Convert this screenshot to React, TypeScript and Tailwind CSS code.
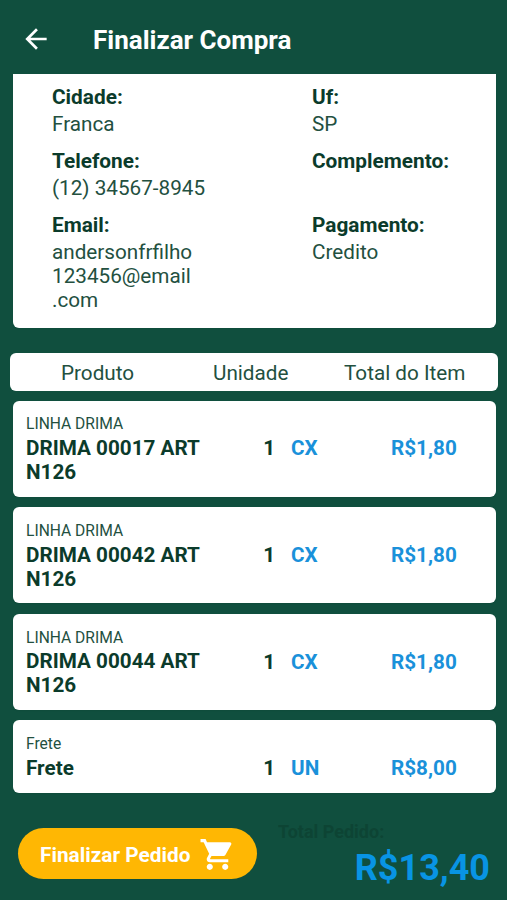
import React from 'react';
import { MdArrowBack, MdShoppingCart } from 'react-icons/md';

interface FieldProps {
  label: string;
  value: string;
}

interface OrderItem {
  group: string;
  name: string;
  quantity: number;
  unit: string;
  total: string;
}

const items: OrderItem[] = [
  { group: 'LINHA DRIMA', name: 'DRIMA 00017 ART N126', quantity: 1, unit: 'CX', total: 'R$1,80' },
  { group: 'LINHA DRIMA', name: 'DRIMA 00042 ART N126', quantity: 1, unit: 'CX', total: 'R$1,80' },
  { group: 'LINHA DRIMA', name: 'DRIMA 00044 ART N126', quantity: 1, unit: 'CX', total: 'R$1,80' },
  { group: 'Frete', name: 'Frete', quantity: 1, unit: 'UN', total: 'R$8,00' },
];

const Field: React.FC<FieldProps> = ({ label, value }) => (
  <div className="min-h-[51px]">
    <h2 className="mb-[3px] text-[20.8px] font-bold">{label}</h2>
    <p className="whitespace-pre-line text-[#23503f]">{value}</p>
  </div>
);

const ItemCard: React.FC<{ item: OrderItem }> = ({ item }) => (
  <li className="flex rounded-md bg-white pt-[13.7px] pb-[12.6px] pl-[13px] font-bold shadow-xs">
    <div className="w-[200px]">
      <p className="text-[15.6px] leading-[21.3px] font-normal text-[#23503f]">{item.group}</p>
      <p className="mt-[0.7px] w-[184px]">{item.name}</p>
    </div>
    <div className="flex flex-1 pt-[22px]">
      <span className="w-[49px] text-right">{item.quantity}</span>
      <span className="ml-[16px] w-[100px] text-[#1a91da]">{item.unit}</span>
      <span className="text-[#1a91da]">{item.total}</span>
    </div>
  </li>
);

const App: React.FC = () => {
  return (
    <div className="flex h-[900px] w-[507px] flex-col overflow-hidden bg-[#104f3e] font-[Roboto,sans-serif] text-[20.7px] leading-[24px] text-[#0b3b2b]">
      <header className="flex h-[74px] shrink-0 items-center pt-[5px] pl-[20px] text-white">
        <button type="button" aria-label="Voltar" className="-mt-[2px]">
          <MdArrowBack size={32} />
        </button>
        <h1 className="ml-[41px] text-[26px] leading-[30px] font-bold">Finalizar Compra</h1>
      </header>

      <section className="mr-[11px] ml-[13px] grid h-[253.5px] shrink-0 grid-cols-[260px_1fr] content-start gap-y-[13px] rounded-b-md bg-white pt-[11px] pl-[39px] shadow-xs">
        <Field label="Cidade:" value="Franca" />
        <Field label="Uf:" value="SP" />
        <Field label="Telefone:" value="(12) 34567-8945" />
        <Field label="Complemento:" value="" />
        <Field label="Email:" value={'andersonfrfilho\n123456@email\n.com'} />
        <Field label="Pagamento:" value="Credito" />
      </section>

      <div className="mt-[25.5px] mr-[9px] ml-[10px] flex h-[37.5px] shrink-0 items-center rounded-md bg-white pt-[2px] pl-[51px] text-[#23503f]">
        <span className="w-[152px]">Produto</span>
        <span className="w-[131px]">Unidade</span>
        <span>Total do Item</span>
      </div>

      <ul className="mt-[10px] mr-[11px] ml-[13px] flex shrink-0 flex-col gap-[10.4px]">
        {items.map((item) => (
          <ItemCard key={item.name} item={item} />
        ))}
      </ul>

      <footer className="flex flex-1 pt-[35.6px] pr-[17px] pl-[18px]">
        <button
          type="button"
          className="flex h-[51px] w-[239px] shrink-0 items-center rounded-full bg-[#ffb703] pl-[22px] font-bold text-white"
        >
          <span className="w-[158.5px] pt-[2px] text-left text-[20.8px]">Finalizar Pedido</span>
          <MdShoppingCart size={37} className="mt-px" />
        </button>
        <div className="flex-1 pl-[21px] font-bold">
          <p className="-mt-[8px] text-[18px] text-[#0d4434]">Total Pedido:</p>
          <p className="mt-[3px] text-right text-[36px] leading-[42px] text-[#0894e4]">R$13,40</p>
        </div>
      </footer>
    </div>
  );
};

export default App;
